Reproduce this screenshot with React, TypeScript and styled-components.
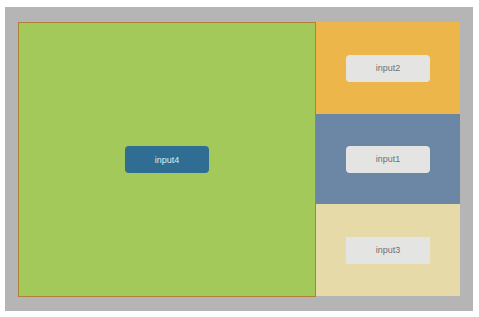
import React from 'react';
import styled, { createGlobalStyle } from 'styled-components';

const GlobalStyle = createGlobalStyle`
  html, body {
    margin: 0;
    padding: 0;
    background: #ffffff;
    font-family: "Liberation Sans", Arial, sans-serif;
  }
`;

// Grey outer frame
const Frame = styled.div`
  box-sizing: border-box;
  width: 468px;
  height: 304px;
  margin: 7px 0 0 5px;
  padding: 15px 13px 14px 13px;
  background: #b5b5b5;
  display: flex;
`;

// Big left pane
const MainPane = styled.div`
  box-sizing: border-box;
  width: 298px;
  height: 275px;
  background: #a3c95a;
  border: 1px solid #b0813a;
  display: flex;
  align-items: center;
  justify-content: center;
`;

// Stack of three coloured panes on the right
const SideColumn = styled.div`
  width: 144px;
  height: 274px;
  display: grid;
  grid-template-rows: 92px 90px 92px;
`;

const SidePane = styled.div<{ $bg: string }>`
  background: ${(p) => p.$bg};
  display: flex;
  align-items: center;
  justify-content: center;
`;

const InputButton = styled.button<{ $dark?: boolean; $square?: boolean }>`
  box-sizing: border-box;
  width: 84px;
  height: 27px;
  border: none;
  border-radius: ${(p) => (p.$square ? '1px' : '4px')};
  background: ${(p) => (p.$dark ? '#2f6d93' : '#e4e4e2')};
  color: ${(p) => (p.$dark ? '#d9eef2' : '#707070')};
  font-family: "Liberation Sans Narrow", "Liberation Sans", Arial, sans-serif;
  font-size: 9px;
  padding: 0;
  cursor: pointer;
`;

const App: React.FC = () => {
  return (
    <>
      <GlobalStyle />
      <Frame>
        <MainPane>
          <InputButton $dark>input4</InputButton>
        </MainPane>
        <SideColumn>
          <SidePane $bg="#ecb64b">
            <InputButton>input2</InputButton>
          </SidePane>
          <SidePane $bg="#6b87a5">
            <InputButton>input1</InputButton>
          </SidePane>
          <SidePane $bg="#e6dba8">
            <InputButton $square>input3</InputButton>
          </SidePane>
        </SideColumn>
      </Frame>
    </>
  );
};

export default App;
